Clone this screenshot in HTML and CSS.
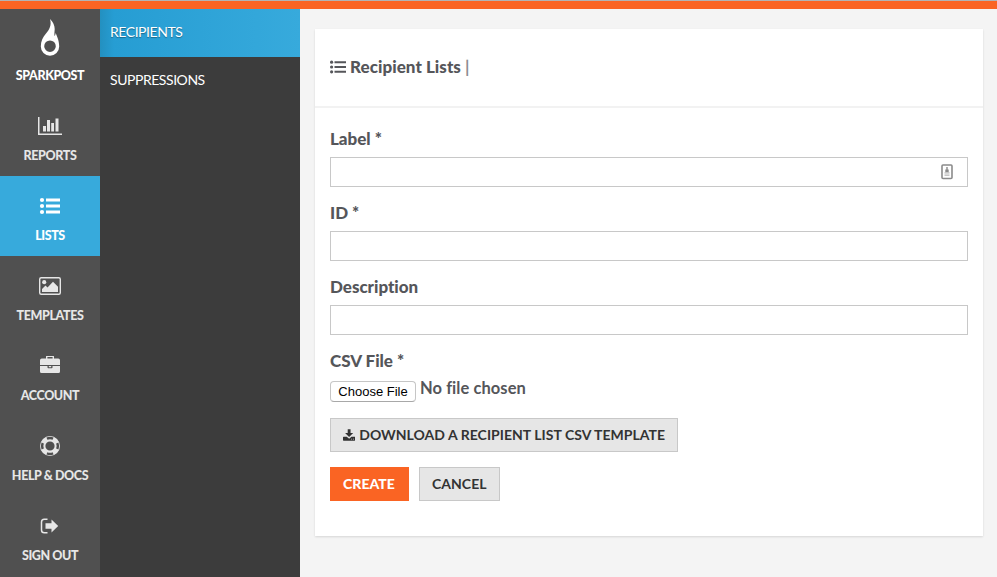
FILE: index.html
```html
<!DOCTYPE html>
<html lang="en">
<head>
<meta charset="utf-8">
<title>Recipient Lists</title>
<link rel="stylesheet" href="styles.css">
</head>
<body>
<div class="topbar"></div>
<div class="layout">
  <nav class="rail">
    <a class="rail-item brand">
      <svg class="flame" viewBox="0 0 20 38"><path fill="#fff" fill-rule="evenodd" d="M10 0C13 3 14.800 6.500 14.700 10C14.600 12.500 14.200 15 14.500 17C15.300 16.500 15.600 15 15.700 13.800C16.500 17 19.200 21 19.200 27.500A9.200 9.200 0 0 1 .8 27.500C.8 22 3 18 6 14.500C9.500 10.500 11.800 6 10 0ZM10 21.400A5.800 5.800 0 1 0 10 33A5.800 5.800 0 1 0 10 21.400Z"/></svg>
      <span>SPARKPOST</span>
    </a>
    <a class="rail-item">
      <svg viewBox="0 0 24 20"><path d="M0 1h1.500v16.500H24V19H0zM5 10h3v5.500H5zM9 4h3v11.500H9zM13.200 7h2.800v8.500h-2.800zM17.500 2.500h3v13h-3z"/></svg>
      <span>REPORTS</span>
    </a>
    <a class="rail-item active">
      <svg viewBox="0 0 24 20"><circle cx="4" cy="4" r="2.100"/><circle cx="4" cy="10" r="2.100"/><circle cx="4" cy="16" r="2.100"/><path d="M8 2.500h14v3H8zM8 8.500h14v3H8zM8 14.500h14v3H8z"/></svg>
      <span>LISTS</span>
    </a>
    <a class="rail-item">
      <svg viewBox="0 0 24 20"><rect x="1.700" y="1.700" width="20.600" height="16.600" rx="1.500" fill="none" stroke="#e6e6e6" stroke-width="1.400"/><circle cx="6.200" cy="6.200" r="2.100"/><path d="M4 16v-3l3.500-3.500 2 2 5.500-5.700 5 5V16z"/></svg>
      <span>TEMPLATES</span>
    </a>
    <a class="rail-item">
      <svg viewBox="0 0 24 20"><path fill-rule="evenodd" d="M8 2.500V.8Q8-.3 9-.3h6q1 0 1 1.100v1.700h4.200Q22 2.500 22 4.300V9H2V4.300Q2 2.500 3.800 2.500zM9.400 2.500h5.200V1H9.400zM2 10h7.500v1.500q0 .8.800.8h3.400q.8 0 .8-.8V10H22v5.500q0 1.500-1.500 1.500h-17Q2 17 2 15.500zM10.800 10h2.400v1.200h-2.400z"/></svg>
      <span>ACCOUNT</span>
    </a>
    <a class="rail-item">
      <svg viewBox="0 0 24 20"><circle cx="12" cy="10" r="7.300" fill="none" stroke="#e6e6e6" stroke-width="5.400"/><g fill="none" stroke="#505050" stroke-width="2.500"><path d="M8.900 2.700a8 8 0 0 1 6.200 0M8.900 17.300a8 8 0 0 0 6.200 0M4.700 6.900a8 8 0 0 0 0 6.200M19.300 6.900a8 8 0 0 1 0 6.200"/></g></svg>
      <span>HELP &amp; DOCS</span>
    </a>
    <a class="rail-item">
      <svg viewBox="0 0 24 20"><path d="M9.500 3.200H6.300Q3.500 3.200 3.500 6v8q0 2.800 2.800 2.800h3.200" fill="none" stroke="#e6e6e6" stroke-width="1.500"/><path d="M7.500 7.300h6V3.500L20.200 10l-6.700 6.500v-3.800h-6z"/></svg>
      <span>SIGN OUT</span>
    </a>
  </nav>
  <nav class="subnav">
    <a class="sub-item current"><span>RECIPIENTS</span></a>
    <a class="sub-item"><span>SUPPRESSIONS</span></a>
  </nav>
  <main class="content">
    <section class="panel">
      <header class="panel-head">
        <svg class="head-icon" viewBox="0 0 16 14"><circle cx="1.600" cy="2.200" r="1.600"/><circle cx="1.600" cy="7" r="1.600"/><circle cx="1.600" cy="11.800" r="1.600"/><path d="M4.500 1.200H16v2H4.500zM4.500 6H16v2H4.500zM4.500 10.800H16v2H4.500z"/></svg>
        <h1><span>Recipient Lists</span><span class="pipe">|</span></h1>
      </header>
      <form class="form">
        <label class="field"><span class="field-label">Label *</span>
          <span class="input">
            <svg class="autofill" viewBox="0 0 12 16"><rect x="1" y="1" width="10" height="13.500" rx="1" fill="#fff" stroke="#8b8b8b" stroke-width="1.600"/><path fill="#8b8b8b" d="M5.300 3h1.400v2.500h1V8H4.300V5.500h1z"/><path fill="#b5b5b5" d="M3.500 8.300h5v1.300h-5zM3.500 10.600h5v1.200h-5z"/></svg>
          </span>
        </label>
        <label class="field"><span class="field-label">ID *</span><span class="input"></span></label>
        <label class="field"><span class="field-label">Description</span><span class="input"></span></label>
        <div class="field-label">CSV File *</div>
        <div class="file-row">
          <button type="button" class="choose">Choose File</button>
          <span class="file-name">No file chosen</span>
        </div>
        <button type="button" class="btn download"><svg class="dl" viewBox="0 0 13 12"><path fill-rule="evenodd" d="M5 0h3v4h2.800L6.500 8.200 2.200 4H5zM.6 7.800H4l2.500 2.200L9 7.800h3.400q.6 0 .6.600v3q0 .6-.6.600H.6q-.6 0-.6-.6v-3q0-.6.6-.6zM8.700 10v.9h.9V10zM10.700 10v.9h.9V10z"/></svg><span>DOWNLOAD A RECIPIENT LIST CSV TEMPLATE</span></button>
        <div class="actions">
          <button type="button" class="btn create">CREATE</button>
          <button type="button" class="btn cancel">CANCEL</button>
        </div>
      </form>
    </section>
  </main>
</div>
</body>
</html>
```
FILE: styles.css
```css
* { box-sizing: border-box; }
body {
  margin: 0;
  height: 577px;
  overflow: hidden;
  background: #f4f4f4;
  color: #55565a;
  font-family: Lato, "Liberation Sans", sans-serif;
}
.topbar { height: 9px; background: #fa6423; border-top: 1px solid #b3b3b3; }
.layout { display: flex; height: 568px; }
span { white-space: nowrap; }

.rail { width: 100px; background: #505050; flex: none; }
.rail-item {
  display: flex;
  flex-direction: column;
  align-items: center;
  height: 80px;
  padding-top: 20px;
  color: #e6e6e6;
  font-size: 12.5px;
  font-weight: 900;
  line-height: 18px;
  letter-spacing: -.4px;
}
.rail-item svg { width: 24px; height: 20px; fill: #e6e6e6; margin-bottom: 11px; }
.rail-item.brand { height: 87px; padding-top: 10px; color: #fff; }
.rail-item .flame { width: 20px; height: 38px; margin-bottom: 10px; }
.rail-item.active { background: #37aadc; color: #fff; }
.rail-item.active svg { fill: #fff; }

.subnav { width: 200px; background: #3c3c3c; flex: none; }
.sub-item {
  display: flex;
  align-items: center;
  height: 48px;
  padding: 0 10px 3px;
  color: #fff;
  font-size: 14px;
  letter-spacing: -.45px;
}
.sub-item.current {
  background: linear-gradient(90deg, #2390c0 0, #269dd3 14px, #37aadc 100%);
  text-shadow: 0 1px 1px rgba(0, 0, 0, .35);
}

.content { flex: 1; padding: 20px 14px 0 15px; }
.panel {
  height: 507px;
  background: #fff;
  box-shadow: 0 1px 2px rgba(0, 0, 0, .12);
}
.panel-head {
  display: flex;
  align-items: center;
  height: 79px;
  padding: 0 15px 2px;
  border-bottom: 2px solid #f2f2f2;
}
.head-icon { width: 16px; height: 14px; fill: #55565a; margin-right: 4px; }
h1 { display: flex; margin: 0; font-size: 17px; line-height: 20px; font-weight: 900; letter-spacing: .05px; }
.pipe { font-weight: 700; margin-left: 4px; color: #8c8c90; }

.form { padding: 20px 15px 0; }
.field { display: block; height: 74px; }
.field-label {
  display: block;
  height: 29px;
  font-size: 17px;
  line-height: 22px;
  font-weight: 900;
  letter-spacing: -.02px;
}
.input {
  display: flex;
  align-items: center;
  justify-content: flex-end;
  height: 30px;
  padding-right: 14px;
  border: 1px solid #c8c8c8;
  background: #fff;
}
.autofill { width: 12px; height: 16px; }
.file-row { display: flex; height: 39px; gap: 4px; }
.choose {
  width: 86px;
  height: 21px;
  margin-top: 2px;
  padding: 0;
  border: 1px solid #c6c6c6;
  border-bottom-color: #a8a8a8;
  border-radius: 4px;
  background: #fff;
  color: #000;
  font: 13px/19px "Liberation Sans", Arial, sans-serif;
}
.file-name { font-size: 16.5px; line-height: 18px; font-weight: 700; letter-spacing: .06px; }
.btn {
  display: flex;
  align-items: center;
  height: 34px;
  padding: 0 12px;
  border: 1px solid #c8c8c8;
  border-radius: 0;
  background: #e6e6e6;
  color: #333;
  font: 700 14px/20px Lato, "Liberation Sans", sans-serif;
  letter-spacing: .03px;
}
.download { width: 348px; }
.dl { width: 13px; height: 12px; margin-right: 4px; fill: #333; }
.actions { display: flex; gap: 10px; margin-top: 15px; }
.create { width: 79px; background: #fa6423; border-color: #fa6423; color: #fff; font-weight: 900; }
.cancel { width: 81px; }
```
